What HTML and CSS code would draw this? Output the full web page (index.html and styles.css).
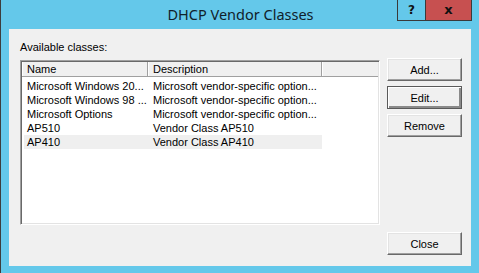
FILE: index.html
```html
<!DOCTYPE html>
<html lang="en">
<head>
<meta charset="UTF-8">
<meta name="viewport" content="width=device-width, initial-scale=1.0">
<title>DHCP Vendor Classes</title>
<link rel="stylesheet" href="styles.css">
</head>
<body>
<div class="window">
    <div class="titlebar">
        <span class="title">DHCP Vendor Classes</span>
        <div class="controls">
            <span class="ctl help">?</span>
            <span class="ctl close">x</span>
        </div>
    </div>
    <div class="panel">
        <label class="caption">Available classes:</label>
        <div class="listview">
            <div class="header">
                <div class="hcell name">Name</div>
                <div class="hcell desc">Description</div>
                <div class="hcell rest"></div>
            </div>
            <div class="rows">
                <div class="row"><span class="c1">Microsoft Windows 20...</span><span class="c2">Microsoft vendor-specific option...</span></div>
                <div class="row"><span class="c1">Microsoft Windows 98 ...</span><span class="c2">Microsoft vendor-specific option...</span></div>
                <div class="row"><span class="c1">Microsoft Options</span><span class="c2">Microsoft vendor-specific option...</span></div>
                <div class="row"><span class="c1">AP510</span><span class="c2">Vendor Class AP510</span></div>
                <div class="row selected"><span class="c1">AP410</span><span class="c2">Vendor Class AP410</span></div>
            </div>
        </div>
        <div class="side">
            <button class="btn">Add...</button>
            <button class="btn default">Edit...</button>
            <button class="btn">Remove</button>
        </div>
        <div class="footer">
            <button class="btn">Close</button>
        </div>
    </div>
</div>
</body>
</html>
```

FILE: styles.css
```css
body {
    margin: 0;
    padding: 0;
    background-color: #64c8ea;
    font-family: "Liberation Sans", Arial, sans-serif;
    font-size: 11px;
    color: #000;
}
.window {
    width: 479px;
    height: 273px;
    box-sizing: border-box;
    border-left: 1px solid #3d3d3d;
    background-color: #64c8ea;
    position: relative;
}
.titlebar {
    height: 29px;
    display: flex;
    justify-content: center;
    align-items: center;
}
.title {
    font-family: "Noto Sans", "Open Sans", sans-serif;
    font-size: 14.5px;
    color: #10212a;
    margin-left: 1px;
    margin-top: -1px;
}
.controls {
    position: absolute;
    top: 0;
    right: 7px;
    display: flex;
    height: 21px;
    border: 1px solid #3a3a3a;
    border-top: none;
    box-sizing: border-box;
}
.ctl {
    display: flex;
    justify-content: center;
    align-items: center;
    font-family: "DejaVu Sans", sans-serif;
    font-weight: bold;
    font-size: 12px;
    color: #111;
}
.help {
    width: 27px;
    border-right: 1px solid #3a3a3a;
}
.close {
    width: 45px;
    background-color: #c75050;
    font-size: 13px;
    padding-bottom: 1px;
}
.panel {
    margin: 0 8px 0 8px;
    height: 237px;
    box-sizing: border-box;
    background-color: #f0f0f0;
    padding: 12px 10px 0 11px;
    display: grid;
    grid-template-columns: 360px 75px;
    grid-template-rows: 13px 165px auto;
    column-gap: 7px;
    row-gap: 6px;
}
.caption {
    line-height: 13px;
    grid-column: 1;
}
.listview {
    grid-column: 1;
    grid-row: 2;
    background-color: #fff;
    box-sizing: border-box;
    border-top: 1px solid #a0a0a0;
    border-left: 1px solid #a0a0a0;
    border-right: 1px solid #fff;
    border-bottom: 1px solid #fff;
    box-shadow: inset 1px 1px #696969, inset -1px -1px #e3e3e3;
    padding: 1px;
    overflow: hidden;
}
.header {
    display: flex;
    height: 15px;
    background-color: #f0f0f0;
}
.hcell {
    box-sizing: border-box;
    border-right: 1px solid #a0a0a0;
    border-bottom: 1px solid #a0a0a0;
    box-shadow: inset 1px 0 #fff;
    line-height: 14px;
    padding-left: 5px;
}
.name {
    width: 126px;
}
.desc {
    width: 174px;
}
.rest {
    flex: 1;
    border-right: none;
}
.rows {
    padding: 2px 0 0 2px;
}
.row {
    display: flex;
    width: 298px;
    height: 14px;
    line-height: 14px;
}
.row.selected {
    background-color: #efefef;
}
.c1 {
    width: 126px;
    padding-left: 3px;
    box-sizing: border-box;
    white-space: nowrap;
}
.c2 {
    padding-left: 3px;
    white-space: nowrap;
}
.side {
    grid-column: 2;
    grid-row: 2;
    margin-top: -2px;
    display: flex;
    flex-direction: column;
    gap: 5px;
}
.btn {
    width: 75px;
    height: 23px;
    box-sizing: border-box;
    font-family: "Liberation Sans", Arial, sans-serif;
    font-size: 11px;
    color: #000;
    background-color: #f0f0f0;
    border-top: 1px solid #fff;
    border-left: 1px solid #fff;
    border-right: 1px solid #696969;
    border-bottom: 1px solid #696969;
    box-shadow: inset -1px -1px #a0a0a0, inset 1px 1px #e3e3e3;
    padding: 0;
    margin: 0;
}
.btn.default {
    border: 1px solid #5a5a5a;
    box-shadow: inset 1px 1px #fff, inset -2px -2px #8a8a8a, inset -1px -1px #696969;
}
.footer {
    grid-column: 2;
    grid-row: 3;
    margin-top: 1px;
}
```
